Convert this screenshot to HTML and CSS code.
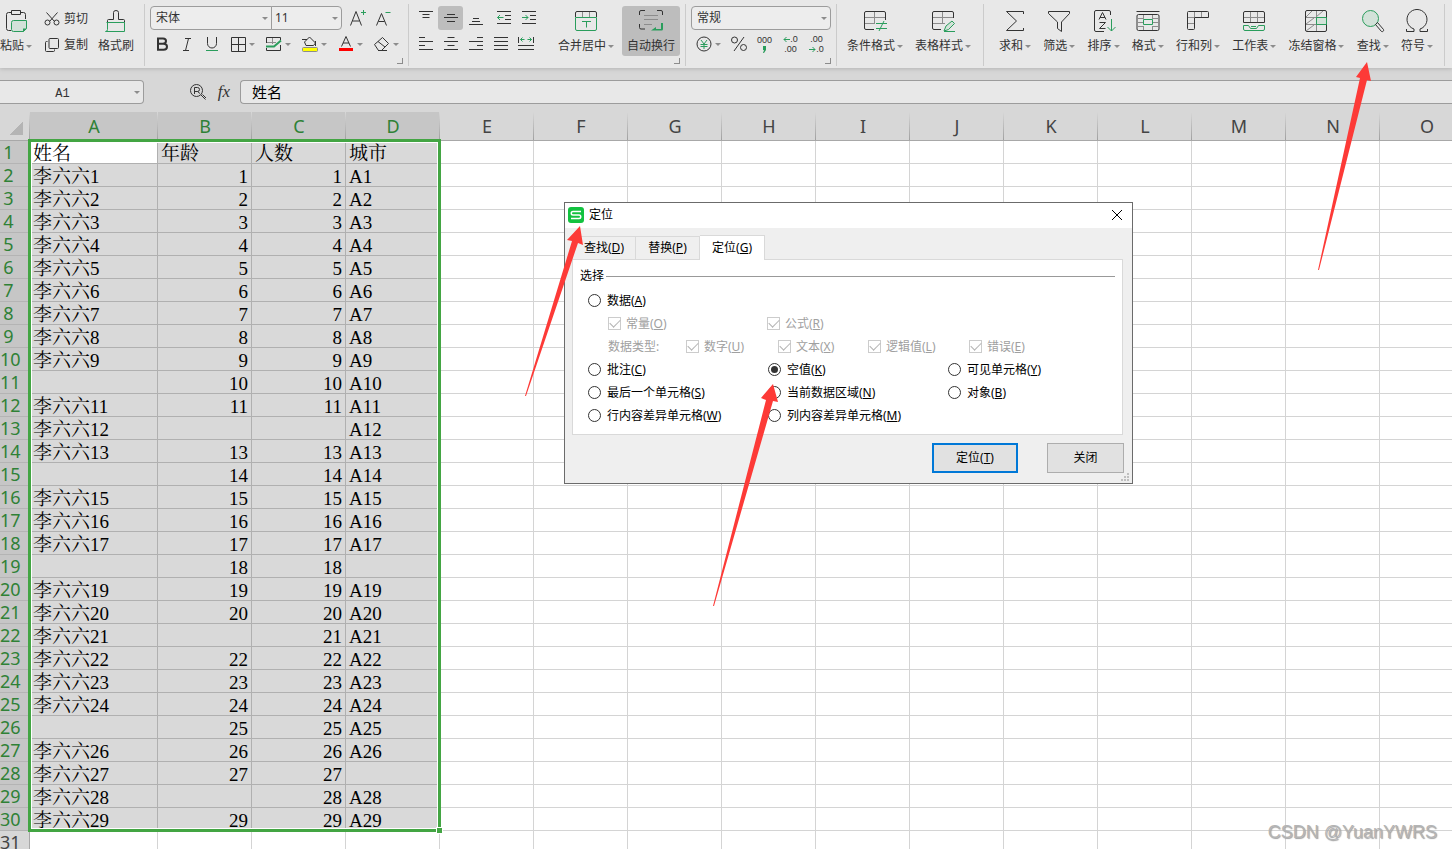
FILE: index.html
```html
<!DOCTYPE html>
<html lang="zh-CN">
<head>
<meta charset="utf-8">
<title>定位</title>
<link rel="stylesheet" href="styles.css">
</head>
<body>
<header class="ribbon">
  <section class="group clipboard">
    <button class="tool"><svg class="ico" width="24" height="24"><path class="k" d="M7 21.500H4.500a2 2 0 0 1-2-2V5.500a2 2 0 0 1 2-2H7M17 3.500h2.500a2 2 0 0 1 2 2V10M7.500 1.500h9v4h-9z"/><path class="g f" d="M9.500 11.500h13v8l-3 3h-10a2 2 0 0 1-2-2v-7a2 2 0 0 1 2-2z"/><path class="gf" d="M19 23v-3.500h4z"/></svg><span class="cap drop">粘贴</span></button>
    <div class="pair">
      <button class="line"><svg width="16" height="16"><path class="k" d="M2.500 1.500l8 9M13.500 1.500l-8 9"/><circle class="k" cx="3.500" cy="11.500" r="2.500"/><circle class="k" cx="12.500" cy="11.500" r="2.500"/></svg>剪切</button>
      <button class="line"><svg width="16" height="16"><path class="k" d="M6 1.500h7.500a1 1 0 0 1 1 1v8a1 1 0 0 1-1 1H6a1 1 0 0 1-1-1v-8a1 1 0 0 1 1-1zM3.500 4.500h-1a1 1 0 0 0-1 1v8a1 1 0 0 0 1 1h7a1 1 0 0 0 1-1v-1"/></svg>复制</button>
    </div>
    <button class="tool"><svg class="ico" width="24" height="24"><path class="k" d="M3.500 13.500v-2a1 1 0 0 1 1-1h5v-7a2.500 2 0 0 1 5 0v7h5a1 1 0 0 1 1 1v2"/><path class="g" d="M2.500 13.500h18v9h-19q2 0 2-2v-7"/></svg><span class="cap">格式刷</span></button>
  </section>

  <section class="group font corner">
    <div class="row">
      <div class="combo family"><select aria-label="字体"><option>宋体</option></select></div><div class="combo size"><select aria-label="字号"><option>11</option></select></div>
      <button class="icon grow" aria-label="增大字号"><svg width="20" height="20"><path class="k" d="M2.500 17.500l5.500-14 5.500 14M4.500 13h7"/><path class="g" d="M13 4.500h5M15.500 2v5"/></svg></button>
      <button class="icon" aria-label="减小字号"><svg width="20" height="20"><path class="k" d="M3.500 17.500l5-12 5 12M5.500 13.500h6"/><path class="g" d="M12.500 4.500h5"/></svg></button>
    </div>
    <div class="row styles">
      <button class="icon" aria-label="加粗"><svg width="16" height="16"><path class="k bold" d="M4 2.500h5q3 0 3 2.500t-3 2.800H4zM4 7.800h5.500q3.500 0 3.500 3t-3.500 3H4z"/></svg></button>
      <button class="icon" aria-label="倾斜"><svg width="16" height="16"><path class="k" d="M6 2.500h6M4 14.500h6M9.500 2.500l-3 12"/></svg></button>
      <button class="icon" aria-label="下划线"><svg width="16" height="16"><path class="k" d="M3.500 1v6.500a4.500 4.500 0 0 0 9 0V1"/><path class="g" d="M2 14.500h12"/></svg></button>
      <button class="icon drop wide" aria-label="边框"><svg width="18" height="18"><path class="k" d="M2.500 2.500h14v14h-14zM9.500 2v15M2 9.500h15"/></svg></button>
      <button class="icon drop wide" aria-label="表格"><svg width="18" height="18"><path class="k" d="M1.500 8V2.500h14V5M1.500 13v2.500h14V10"/><path class="s" d="M7.500 3v6M2 7.500h9"/><path class="g w2" d="M1 11.500h8l7-6"/></svg></button>
      <button class="icon drop wide" aria-label="填充颜色"><svg width="18" height="18"><path class="k" d="M1 4.500h5M5 10.500L3.500 7l5-5 6 6-2 2.500zM14.500 6v5"/><rect class="yellow" x="1.500" y="12.500" width="15" height="4" rx="1"/></svg></button>
      <button class="icon drop wide" aria-label="字体颜色"><svg width="18" height="18"><path class="k" d="M4.500 11.500l4.500-10 4.500 10M6 8h6"/><rect class="red" x="2" y="13" width="14" height="3"/></svg></button>
      <button class="icon drop wide" aria-label="清除"><svg width="18" height="18"><path class="k" d="M1.500 9.500l8-7 6 6-7 7h-3zM5 6.500l7 5.500M5 15.500h9"/></svg></button>
    </div>
  </section>

  <section class="group align corner">
    <div class="stack">
      <div class="row">
        <button class="icon" aria-label="顶端对齐"><svg width="16" height="16"><path class="k" d="M1 1.500h14M4.500 4.500h7M4.500 7.500h7"/></svg></button>
        <button class="icon on" aria-label="垂直居中"><svg width="16" height="16"><path class="k" d="M4 4.500h8M1 7.500h14M4 11.500h8"/></svg></button>
        <button class="icon" aria-label="底端对齐"><svg width="16" height="16"><path class="k" d="M5 8.500h6M4 11.500h8M1 14.500h14"/></svg></button>
        <button class="icon indent" aria-label="减少缩进"><svg width="16" height="16"><path class="k" d="M1 1.500h14M9 5.500h6M9 9.500h6M1 13.500h14"/><path class="g" d="M7.500 7.500h-6M4 5L1.500 7.500 4 10"/></svg></button>
        <button class="icon" aria-label="增加缩进"><svg width="16" height="16"><path class="k" d="M1 1.500h14M9 5.500h6M9 9.500h6M1 13.500h14"/><path class="g" d="M1 7.500h6M4.500 5L7 7.500 4.500 10"/></svg></button>
      </div>
      <div class="row">
        <button class="icon" aria-label="左对齐"><svg width="16" height="16"><path class="k" d="M1 1.500h6M1 5.500h14M1 9.500h6M1 13.500h14"/></svg></button>
        <button class="icon" aria-label="居中"><svg width="16" height="16"><path class="k" d="M4.500 1.500h7M1 5.500h14M4.500 9.500h7M1 13.500h14"/></svg></button>
        <button class="icon" aria-label="右对齐"><svg width="16" height="16"><path class="k" d="M9 1.500h6M1 5.500h14M9 9.500h6M1 13.500h14"/></svg></button>
        <button class="icon" aria-label="两端对齐"><svg width="16" height="16"><path class="k" d="M1 1.500h14M1 5.500h14M1 9.500h14M1 13.500h14"/></svg></button>
        <button class="icon" aria-label="分散对齐"><svg width="18" height="16"><path class="k" d="M1.500 1v6M16.500 1v6M1 9.500h16M1 13.500h16"/><path class="g" d="M7.500 3.500h-4M5.500 1.500l-2 2 2 2M10.500 3.500h4M12.500 1.500l2 2-2 2"/></svg></button>
      </div>
    </div>
    <button class="tool merge"><svg class="ico" width="24" height="24"><path class="k" d="M1.500 8V4a1.500 1.500 0 0 1 1.500-1.500h18A1.500 1.500 0 0 1 22.500 4v4"/><path class="s" d="M8.500 3v5M15.500 3v5"/><path class="g" d="M1.500 8.500h21V20a1.500 1.500 0 0 1-1.500 1.500H3A1.500 1.500 0 0 1 1.500 20zM8 12.500h9M12.500 12.500v6"/></svg><span class="cap drop">合并居中</span></button>
    <button class="tool wrap on"><svg class="ico" width="24" height="24"><path class="k" d="M.500 6V3A1.500 1.500 0 0 1 2 1.500h4M18 1.500h4A1.500 1.500 0 0 1 23.500 3v3M.500 15v3.500A1.500 1.500 0 0 0 2 20h4"/><path class="s" d="M5 6.500h14M5 10.500h14M5 15.500h8"/><path class="gf" d="M22 14h2v6a1.500 1.500 0 0 1-1.500 1.500H12l5-3.500v2h5z"/></svg><span class="cap">自动换行</span></button>
  </section>

  <section class="group number corner">
    <div class="row"><div class="combo format"><select aria-label="数字格式"><option>常规</option></select></div></div>
    <div class="row">
      <button class="icon drop wide" aria-label="货币"><svg width="18" height="18"><circle class="k" cx="9" cy="9" r="7"/><path class="g" d="M6 5l3 4 3-4M9 9v5M5.500 9.500h7M5.500 11.500h7"/></svg></button>
      <button class="icon pct" aria-label="百分比"><svg width="18" height="18"><circle class="k" cx="4.500" cy="5" r="3"/><circle class="k" cx="13.500" cy="12.500" r="3"/><path class="k" d="M14 2L4 16"/></svg></button>
      <button class="icon num" aria-label="千位分隔"><span>000</span><svg width="7" height="8"><path class="gf" d="M2 1h3v4L3 8H2l1-3H2z"/></svg></button>
      <button class="icon num"><span><svg width="7" height="7"><path class="g" d="M7 3.500H1M3.500 1L1 3.500 3.500 6"/></svg>.0</span><span>.00</span></button>
      <button class="icon num"><span>.00</span><span><svg width="7" height="7"><path class="g" d="M0 3.500h6M3.500 1L6 3.500 3.500 6"/></svg>.0</span></button>
    </div>
  </section>

  <section class="group tools style">
    <button class="tool"><svg class="ico" width="24" height="24"><path class="k" d="M11 20.500H3A1.500 1.500 0 0 1 1.500 19V4A1.500 1.500 0 0 1 3 2.500h18A1.500 1.500 0 0 1 22.500 4v7"/><path class="s" d="M2 8.500h20M2 14.500h9M11.500 3v12"/><path class="g" d="M13 14.500h11M13 19.500h11M21 12l-5 10"/></svg><span class="cap drop">条件格式</span></button>
    <button class="tool"><svg class="ico" width="24" height="24"><path class="k" d="M10 20.500H3A1.500 1.500 0 0 1 1.500 19V4A1.500 1.500 0 0 1 3 2.500h18A1.500 1.500 0 0 1 22.500 4v5"/><path class="s" d="M2 8.500h20M2 14.500h12M11.500 3v12"/><path class="g f" d="M13 22l2-5 6-5 2.500 2.500-6 6zM13 22.500h11"/></svg><span class="cap drop">表格样式</span></button>
  </section>

  <section class="group tools edit">
    <button class="tool"><svg class="ico" width="24" height="24"><path class="k" d="M20.500 5V2.500H3.500l10 9.500-10 9.500h17V19"/></svg><span class="cap drop">求和</span></button>
    <button class="tool"><svg class="ico" width="24" height="24"><path class="k" d="M1.500 2.500h21v2l-8 8.500v9.500l-4-3V13l-9-8.500z"/></svg><span class="cap drop">筛选</span></button>
    <button class="tool"><svg class="ico" width="24" height="24"><path class="k" d="M12 22.500H4A1.500 1.500 0 0 1 2.500 21V3A1.500 1.500 0 0 1 4 1.500h13A1.500 1.500 0 0 1 18.500 3v3M7 10.500l3.500-7 3.500 7M8 8.500h5M7.500 13.500h6l-6 6h6"/><path class="g" d="M19.500 10v12M15.500 18l4 4 4-4"/></svg><span class="cap drop">排序</span></button>
    <button class="tool"><svg class="ico" width="24" height="24"><path class="k" d="M.500 2.500h23M2.500 5.500h19a1.500 1.500 0 0 1 1.500 1.500v13a1.500 1.500 0 0 1-1.500 1.500h-19A1.500 1.500 0 0 1 1 20V7a1.500 1.500 0 0 1 1.500-1.500z"/><path class="s" d="M2 9.500h5M17 9.500h5M2 17.500h5M17 17.500h5M7.500 6v4M16.500 6v4M7.500 17v4M16.500 17v4M2 13.500h5M17 13.500h5"/><path class="g" d="M7.500 10.500h9v5h-9z"/></svg><span class="cap drop">格式</span></button>
    <button class="tool"><svg class="ico" width="24" height="24"><path class="k" d="M2.500 2.500h19a1 1 0 0 1 1 1v5h-14v11a1 1 0 0 1-1 1h-5a1 1 0 0 1-1-1v-16a1 1 0 0 1 1-1z"/><path class="s" d="M8.500 3v5M15.500 3v5M2 8.500h6M2 14.500h6"/></svg><span class="cap drop">行和列</span></button>
    <button class="tool"><svg class="ico" width="24" height="24"><path class="k" d="M1.500 13.500V4A1.500 1.500 0 0 1 3 2.500h18A1.500 1.500 0 0 1 22.500 4v9.500z"/><path class="s" d="M8.500 3v10M15.500 3v10M2 8.500h20"/><path class="g" d="M1.500 16.500h5l2 3h6l2-3h6V20a1.500 1.500 0 0 1-1.500 1.500H3A1.500 1.500 0 0 1 1.500 20zM9 17.500h5"/></svg><span class="cap drop">工作表</span></button>
    <button class="tool"><svg class="ico" width="24" height="24"><path class="g f" d="M12.500 8.500h10v7h-10z"/><path class="k" d="M3 1.500h18A1.500 1.500 0 0 1 22.500 3v18a1.500 1.500 0 0 1-1.500 1.500H3A1.500 1.500 0 0 1 1.500 21V3A1.500 1.500 0 0 1 3 1.500z"/><path class="s" d="M2 8.500h10M2 15.500h20M12.500 2v6M12.500 16v6M2 8l6-6M12 8l7-6M2 15l8-6M2 22l8-6"/><path class="g" d="M12.500 8.500h10v7h-10z"/></svg><span class="cap drop">冻结窗格</span></button>
    <button class="tool"><svg class="ico" width="24" height="24"><circle class="g f" cx="9.500" cy="9.500" r="8"/><path class="k" d="M14.500 15.500l2-2 6 7a1.500 1.500 0 0 1-2 2z"/></svg><span class="cap drop">查找</span></button>
    <button class="tool"><svg class="ico" width="24" height="24"><path class="k" d="M1.500 20v2.500H9V20a10 10 0 1 1 6 0v2.500h7.500V20"/></svg><span class="cap drop">符号</span></button>
  </section>
</header>

<div class="formula-bar">
  <div class="combo name"><input type="text" value="A1" aria-label="名称框"></div>
  <button class="icon find" aria-label="浏览"><svg width="18" height="18"><circle class="k" cx="7.500" cy="7.500" r="6"/><path class="k" d="M5.500 11V4.500h3q2 0 2 2t-2 2h-3M8.500 8.500l2.500 2M12 12l4.500 4.500M13.500 11.500l3.500 3.500"/></svg></button>
  <button class="fx">fx</button>
  <input class="formula" type="text" value="姓名" aria-label="编辑栏">
</div>

<main class="sheet">
  <table>
    <colgroup><col class="c-head"><col class="c-a"><col span="14" class="c-n"></colgroup>
    <thead><tr id="letters"><th class="all"></th></tr></thead>
    <tbody id="rows"></tbody>
  </table>
  <div class="selection"><span class="handle"></span></div>
</main>

<div class="dialog" role="dialog" aria-label="定位">
  <div class="title">
    <svg width="16" height="16"><rect class="logo" width="16" height="16" rx="3"/><path class="logo-s" d="M13 4.500H5a1.500 1.500 0 0 0 0 3.500h6a1.500 1.500 0 0 1 0 3.500H3"/></svg>
    <span>定位</span>
    <button class="close" aria-label="关闭窗口"><svg width="12" height="12"><path d="M1 1l10 10M11 1L1 11"/></svg></button>
  </div>
  <div class="tabs" role="tablist">
    <button role="tab">查找(<u>D</u>)</button><button role="tab">替换(<u>P</u>)</button><button role="tab" class="active">定位(<u>G</u>)</button>
  </div>
  <form class="panel">
    <div class="legend">选择</div>
    <div class="options"><label><input type="radio" name="t">数据(<u>A</u>)</label></div>
    <div class="sub first">
      <label><input type="checkbox" checked disabled>常量(<u>O</u>)</label>
      <label><input type="checkbox" checked disabled>公式(<u>R</u>)</label>
    </div>
    <div class="sub types">
      <span>数据类型:</span>
      <label><input type="checkbox" checked disabled>数字(<u>U</u>)</label>
      <label><input type="checkbox" checked disabled>文本(<u>X</u>)</label>
      <label><input type="checkbox" checked disabled>逻辑值(<u>L</u>)</label>
      <label><input type="checkbox" checked disabled>错误(<u>E</u>)</label>
    </div>
    <div class="options">
      <label><input type="radio" name="t">批注(<u>C</u>)</label>
      <label><input type="radio" name="t" checked>空值(<u>K</u>)</label>
      <label><input type="radio" name="t">可见单元格(<u>Y</u>)</label>
      <label><input type="radio" name="t">最后一个单元格(<u>S</u>)</label>
      <label><input type="radio" name="t">当前数据区域(<u>N</u>)</label>
      <label><input type="radio" name="t">对象(<u>B</u>)</label>
      <label><input type="radio" name="t">行内容差异单元格(<u>W</u>)</label>
      <label><input type="radio" name="t">列内容差异单元格(<u>M</u>)</label>
    </div>
  </form>
  <div class="actions">
    <button class="primary">定位(<u>T</u>)</button>
    <button>关闭</button>
  </div>
  <svg class="grip" width="9" height="9"><path d="M6 0h2v2H6zM3 3h2v2H3zM6 3h2v2H6zM0 6h2v2H0zM3 6h2v2H3zM6 6h2v2H6z"/></svg>
</div>

<svg class="arrows" width="1452" height="849">
  <path d="M1367 62l4 19-4-1-48 190-1 0 42-192-4-1z"/>
  <path d="M580 226l3 19-5-2-52 153-1 0 47-155-5-1z"/>
  <path d="M773 384l5 18-5-1-59 205-1 0 53-206-5-2z"/>
</svg>
<div class="watermark">CSDN @YuanYWRS</div>
<script src="grid.js"></script>
</body>
</html>
```
FILE: styles.css
```css
* { box-sizing: border-box; }
body {
  margin: 0;
  height: 100vh;
  display: flex;
  flex-direction: column;
  overflow: hidden;
  position: relative;
  background: #d7d7d7;
  color: #333;
  font: 12px/16px "Noto Sans", "Noto Sans CJK SC", sans-serif;
}
button, input, select { font: inherit; color: inherit; margin: 0; }
button { border: 0; padding: 0; background: none; white-space: nowrap; }
svg { display: block; flex: none; }

.k, .g, .s { fill: none; stroke: #333; }
.g { stroke: #2a9d5c; }
.s { stroke: #8c8c8c; }
.f { fill: #d3e2d9; }
.gf { fill: #2a9d5c; }
.bold { stroke-width: 2; }
.w2 { stroke-width: 2; }
.yellow { fill: #ff0; stroke: #8c8c8c; }
.red { fill: #f00; }

.ribbon {
  display: flex;
  flex: none;
  padding: 4px 0 2px;
  background: #e8e8e8;
  box-shadow: 0 1px 4px #b4b4b4;
}
.group {
  display: flex;
  flex: none;
  position: relative;
  padding-top: 2px;
  height: 62px;
  border-right: 1px solid #cbcbcb;
}
.corner::after {
  content: "";
  position: absolute;
  right: 5px;
  bottom: 2px;
  width: 5px;
  height: 5px;
  border: solid #8c8c8c;
  border-width: 0 1px 1px 0;
}
.tool {
  display: flex;
  flex-direction: column;
  align-items: center;
  height: 50px;
  padding-top: 3px;
  border-radius: 3px;
}
.ico { margin-bottom: 5px; }
.cap { display: block; }
.drop { display: flex; align-items: center; }
.drop::after, .combo::after {
  content: "";
  border: solid transparent;
  border-width: 3px 3px 0;
  border-top-color: #8c8c8c;
  margin-left: 2px;
}
.on { background: #bdbdbd; }
.clipboard { gap: 10px; width: 145px; }
.pair { display: flex; flex-direction: column; gap: 10px; padding: 5px 0 0 2px; }
.line { display: flex; align-items: center; gap: 4px; }
.row { display: flex; height: 24px; }
.icon { display: flex; align-items: center; justify-content: center; width: 25px; height: 24px; border-radius: 3px; }
.wide { width: 36px; }
.font, .number { flex-direction: column; gap: 2px; }
.font { padding-left: 5px; width: 264px; }
.styles { margin-left: -1px; }
.grow { margin-left: 3px; }

.combo { position: relative; height: 24px; }
.combo select, .combo input {
  appearance: none;
  width: 100%;
  height: 24px;
  padding: 0 5px;
  border: 1px solid #9c9c9c;
  border-radius: 4px;
  background: #ededed;
  outline: 0;
}
.combo::after { position: absolute; right: 4px; top: 11px; }
.family { width: 122px; }
.family select { border-radius: 4px 0 0 4px; }
.size { width: 71px; margin-left: -1px; }
.size select { border-radius: 0 4px 4px 0; padding: 0 3px; }
.format { width: 140px; }

.align { padding-left: 4px; width: 277px; }
.stack { display: flex; flex-direction: column; gap: 2px; }
.indent { margin-left: 3px; }
.merge { margin-left: 17px; }
.wrap { width: 58px; margin-left: 8px; }

.number { padding-left: 5px; width: 151px; }
.number .row { gap: 1px; }
.number .wide { width: 34px; }
.num { flex-direction: column; font: 9px/10px "Liberation Sans", sans-serif; }
.num span { display: flex; align-items: center; height: 10px; }

.tools { gap: 12px; }
.style { padding: 2px 12px 0 10px; }
.edit { width: 461px; justify-content: space-between; gap: 0; padding: 2px 11px 0 15px; }

.formula-bar { display: flex; flex: none; padding: 12px 0 8px; height: 44px; }
.name { width: 144px; flex: none; }
.name input { border-left: 0; border-radius: 0 4px 4px 0; text-align: center; padding: 3px 18px 0 0; font-family: "Liberation Mono", monospace; background: #e8e8e8; }
.find { margin-left: 42px; width: 24px; }
.fx { width: 28px; font: italic 17px/24px "Liberation Serif", serif; }
.formula {
  flex: 1;
  min-width: 0;
  height: 24px;
  margin-left: 2px;
  padding: 0 11px 2px;
  border: 1px solid #9c9c9c;
  border-right: 0;
  border-radius: 4px 0 0 4px;
  background: #e8e8e8;
  color: #000;
  font-size: 15px;
}

.sheet { flex: 1; min-height: 0; position: relative; overflow: hidden; background: #fff; }
table { width: 1474px; table-layout: fixed; border-collapse: separate; border-spacing: 0; }
.c-head { width: 30px; }
.c-a { width: 128px; }
.c-n { width: 94px; }
th { padding: 0; background: #d7d7d7; color: #444; font: 18px/22px "Noto Sans", sans-serif; }
thead th { height: 29px; border-bottom: 1px solid #a8a8a8; position: relative; }
thead th::after { content: ""; position: absolute; right: 0; top: 0; bottom: 0; width: 1px; background: linear-gradient(#d7d7d7, #a0a0a0); }
th.sel { background: #c6c6c6; color: #2f8136; }
thead .all { background: linear-gradient(135deg, transparent 50%, #b4b4b4 50%) 9px 9px / 14px 14px no-repeat #d7d7d7; }
tbody th { height: 23px; padding-right: 12px; border-right: 1px solid #a8a8a8; border-bottom: 1px solid #b4b4b4; }
td {
  height: 23px;
  padding: 4px 3px 0;
  border-right: 1px solid #d4d4d4;
  border-bottom: 1px solid #d4d4d4;
  color: #000;
  font: 19px/18px "Liberation Serif", "Noto Serif CJK SC", "Noto Sans CJK SC", serif;
  white-space: nowrap;
}
td.sel { background: #d9d9d9; border-color: #b0b0b0; }
td.cur { background: #fff; }
.num-cell { text-align: right; }
.selection { position: absolute; left: 28px; top: 27px; width: 413px; height: 693px; border: 3px solid #43a543; box-shadow: inset 0 0 0 1px #fff; }
.handle { position: absolute; right: -5px; bottom: -5px; width: 7px; height: 7px; background: #43a543; border: 1px solid #fff; }

.dialog {
  position: absolute;
  left: 564px;
  top: 202px;
  width: 569px;
  border: 1px solid #6b6b6b;
  background: #efefef;
  color: #000;
}
.title { display: flex; align-items: center; gap: 5px; height: 25px; padding: 0 9px 1px 3px; background: #fff; }
.close { margin-left: auto; }
.close path { stroke: #000; }
.logo { fill: #12c23f; }
.logo-s { fill: none; stroke: #fff; stroke-width: 1.500; }
.tabs { display: flex; align-items: flex-end; padding: 7px 8px 0 7px; height: 31px; }
.tabs button { width: 64px; height: 23px; border: 1px solid #d9d9d9; border-bottom: 0; border-left: 0; }
.tabs button:first-child { border-left: 1px solid #d9d9d9; }
.tabs .active { width: 65px; height: 25px; margin-bottom: -1px; background: #fff; z-index: 1; }
.panel { margin: 0 9px 0 7px; height: 176px; padding: 8px 7px 0; border: 1px solid #d9d9d9; background: #fff; }
.legend { display: flex; align-items: center; gap: 2px; height: 16px; margin-bottom: 5px; }
.legend::after { content: ""; flex: 1; height: 1px; background: #999; }
.options { display: grid; grid-template-columns: 180px 180px auto; padding-left: 8px; }
.panel label { display: flex; align-items: center; height: 23px; white-space: nowrap; }
.panel input {
  appearance: none;
  display: grid;
  place-items: center;
  width: 13px;
  height: 13px;
  margin-right: 6px;
  border: 1px solid #333;
  background: #fff;
}
.panel input[type=radio] { border-radius: 50%; }
.panel input[type=radio]:checked::after { content: ""; width: 7px; height: 7px; border-radius: 50%; background: #333; }
.panel input[type=checkbox] { border-color: #ccc; margin-right: 5px; }
.panel input[type=checkbox]::after { content: ""; width: 9px; height: 5px; margin-bottom: 3px; border: solid #b4b4b4; border-width: 0 0 1px 1px; rotate: -45deg; }
.sub { display: grid; padding-left: 28px; color: #a0a0a0; align-items: center; }
.first { grid-template-columns: 159px auto; }
.types { grid-template-columns: 78px 92px 90px 101px auto; }
.actions { display: flex; justify-content: flex-end; gap: 29px; padding: 8px 8px 10px; }
.actions button { width: 77px; height: 30px; border: 1px solid #adadad; background: #e1e1e1; }
.actions .primary { width: 86px; border: 2px solid #0078d7; }
.grip { position: absolute; right: 2px; bottom: 1px; fill: #bfbfbf; }

.arrows { position: absolute; left: 0; top: 0; fill: #fd3a37; pointer-events: none; }
.watermark { position: absolute; right: 15px; bottom: 5px; font: 18px/24px "Liberation Sans", sans-serif; color: #b4b4b4; text-shadow: 1px 1px 1px #a0a0a0; }
```
FILE: grid.js
```js
const letters = "ABCDEFGHIJKLMNO";
const headers = ["姓名", "年龄", "人数", "城市"];
// Record numbers whose name, age, count or city is blank.
const blanks = [[10, 14, 18, 25], [12, 21, 28], [12], [18, 27]];

const head = document.getElementById("letters");
[...letters].forEach((letter, i) => {
  const th = document.createElement("th");
  th.textContent = letter;
  if (i < 4) th.className = "sel";
  head.append(th);
});

const body = document.getElementById("rows");
for (let r = 1; r <= 31; r++) {
  const tr = document.createElement("tr");
  const th = document.createElement("th");
  th.textContent = r;
  if (r < 31) th.className = "sel";
  tr.append(th);
  for (let c = 0; c < letters.length; c++) {
    const td = document.createElement("td");
    if (c < 4 && r < 31) {
      const n = r - 1;
      td.className = "sel";
      if (r === 1) {
        td.textContent = headers[c];
        if (c === 0) td.classList.add("cur");
      } else if (!blanks[c].includes(n)) {
        td.textContent = ["李六六" + n, n, n, "A" + n][c];
        if (c === 1 || c === 2) td.classList.add("num-cell");
      }
    }
    tr.append(td);
  }
  body.append(tr);
}
```
